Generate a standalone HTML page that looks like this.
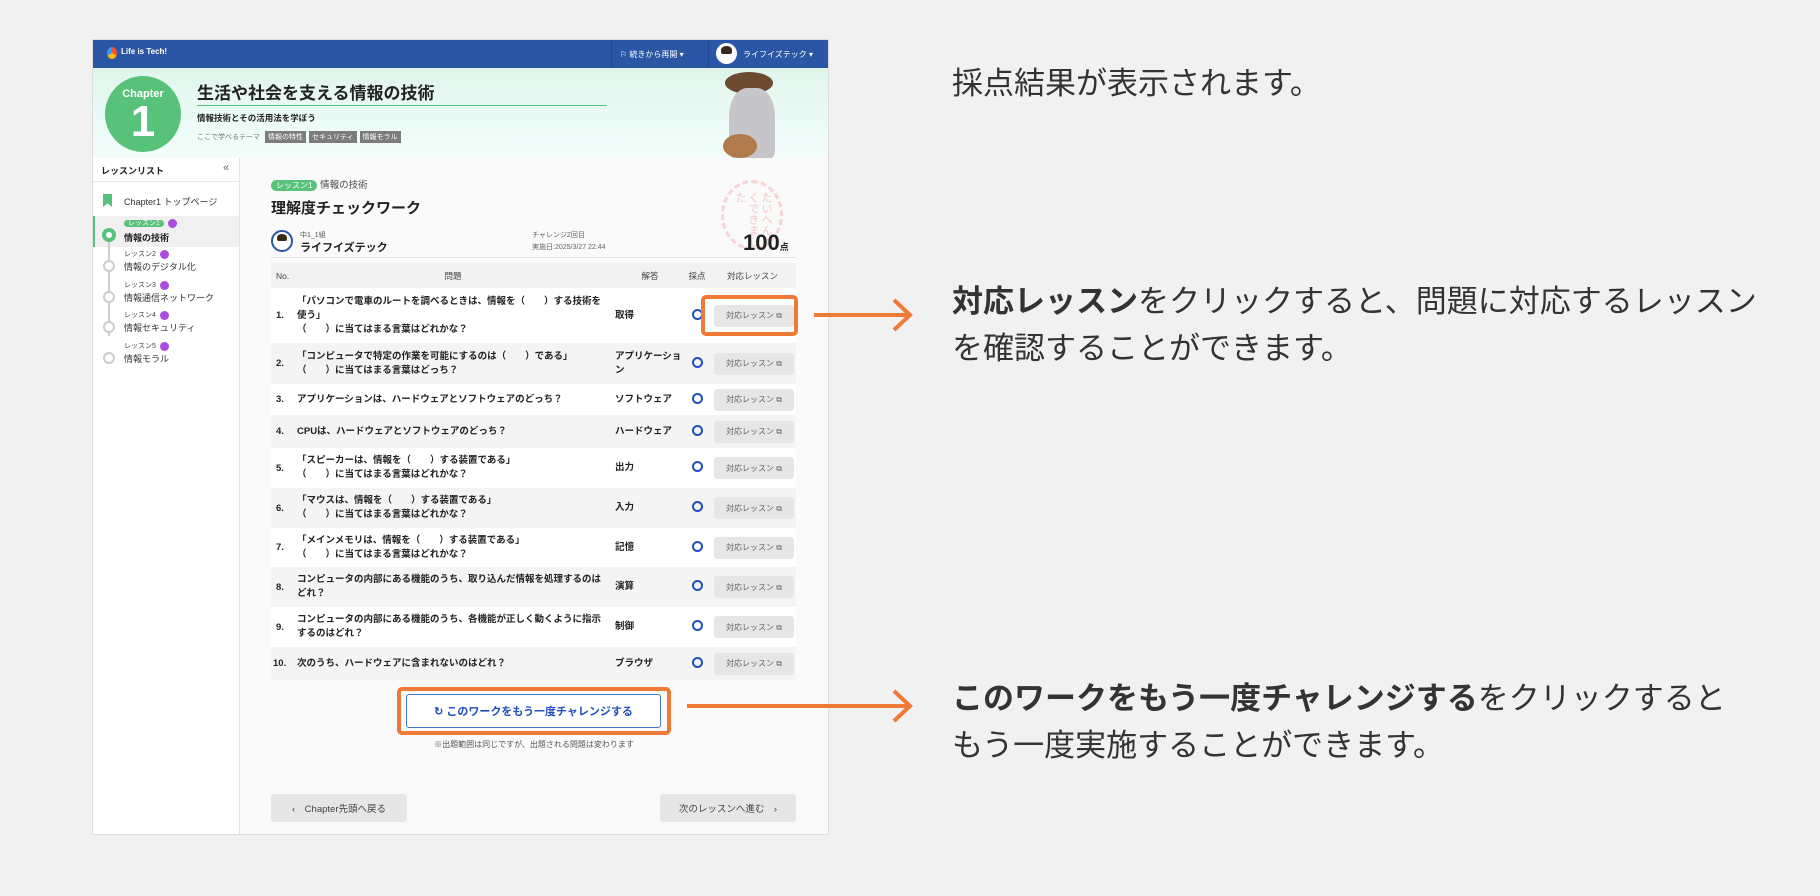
<!DOCTYPE html>
<html><head><meta charset="utf-8">
<style>
*{box-sizing:border-box;margin:0;padding:0}
body{width:1820px;height:896px;background:#f1f1f1;font-family:"Liberation Sans","Noto Sans CJK JP",sans-serif;color:#222;position:relative;overflow:hidden}
.abs{position:absolute}
.panel{left:92px;top:39px;width:737px;height:796px;background:#fafafa;border:1px solid #ddd;overflow:hidden}
.hdr{left:0;top:0;width:737px;height:28px;background:#2a56a5;color:#fff;font-size:9px}
.banner{left:0;top:28px;width:737px;height:90px;background:linear-gradient(180deg,#dff5ea,#ecfbf7 60%,#f3fdfb)}
.side{left:0;top:118px;width:147px;height:678px;background:#fff;border-right:1px solid #e4e4e4}
.row{position:absolute;left:178px;width:525px;display:flex;align-items:center;font-size:9.5px;font-weight:bold;color:#222}
.row .no{width:26px;padding-left:5px}
.row .q{width:318px;line-height:14px;padding-right:6px}
.row .a{width:70px;line-height:14px}
.row .m{width:24px;text-align:center}
.row .m i{display:inline-block;width:11px;height:11px;border:2px solid #1f4fc2;border-radius:50%}
.btn{margin-left:5px;width:80px;height:22px;background:#e6e6e6;border-radius:3px;font-size:8px;color:#666;font-weight:normal;display:flex;align-items:center;justify-content:center}
.rt{font-size:31px;color:#333;line-height:47px;left:952px}
.tag{display:inline-block;background:#7c7c7c;color:#fff;font-size:7px;padding:1px 3px;margin-left:3px}
.star{display:inline-block;width:9px;height:9px;border-radius:50%;background:#a94ee0;margin-left:4px;vertical-align:middle}
</style></head><body>

<div class="abs panel">
  <div class="abs hdr">
    <div class="abs" style="left:14px;top:7px;width:10px;height:12px;border-radius:50%;background:conic-gradient(#e53 0 33%,#fb0 0 66%,#39f 0)"></div>
    <div class="abs" style="left:28px;top:7px;font-size:8px;font-weight:bold">Life is Tech!</div>
    <div class="abs" style="left:518px;top:0;width:1px;height:28px;background:#1d4590"></div>
    <div class="abs" style="left:527px;top:9px;font-size:8px">⚐ 続きから再開 ▾</div>
    <div class="abs" style="left:615px;top:0;width:1px;height:28px;background:#1d4590"></div>
    <div class="abs" style="left:623px;top:3px;width:21px;height:21px;border-radius:50%;background:#fff"></div>
    <div class="abs" style="left:628px;top:6px;width:11px;height:8px;border-radius:50% 50% 2px 2px;background:#3a2a1c"></div>
    <div class="abs" style="left:650px;top:9px;font-size:8px">ライフイズテック ▾</div>
  </div>
  <div class="abs banner">
    <div class="abs" style="left:12px;top:8px;width:76px;height:76px;border-radius:50%;background:#58c27a;color:#fff;text-align:center">
      <div style="font-size:11px;font-weight:bold;margin-top:12px">Chapter</div>
      <div style="font-size:44px;font-weight:bold;line-height:44px">1</div>
    </div>
    <div class="abs" style="left:104px;top:11px;font-size:17px;font-weight:bold;color:#222">生活や社会を支える情報の技術</div>
    <div class="abs" style="left:104px;top:37px;width:410px;height:1px;background:#58c27a"></div>
    <div class="abs" style="left:104px;top:44px;font-size:8.5px;font-weight:bold">情報技術とその活用法を学ぼう</div>
    <div class="abs" style="left:104px;top:63px;font-size:7px;color:#777">ここで学べるテーマ <span class="tag">情報の特性</span><span class="tag">セキュリティ</span><span class="tag">情報モラル</span></div>
    <div class="abs" style="left:632px;top:4px;width:48px;height:22px;border-radius:50%;background:#6b4a30"></div>
    <div class="abs" style="left:636px;top:20px;width:46px;height:70px;border-radius:40% 40% 10% 10%;background:#c6c6ca"></div>
    <div class="abs" style="left:630px;top:66px;width:34px;height:24px;border-radius:50%;background:#b07a4a"></div>
  </div>
  <div class="abs side">
    <div class="abs" style="left:0;top:0;width:147px;height:24px;border-bottom:1px solid #e8e8e8"></div>
    <div class="abs" style="left:8px;top:6px;font-size:9px;font-weight:bold">レッスンリスト</div>
    <div class="abs" style="left:130px;top:4px;font-size:11px;color:#666">«</div>
    <div class="abs" style="left:10px;top:36px;width:9px;height:13px;background:#58c27a;clip-path:polygon(0 0,100% 0,100% 100%,50% 72%,0 100%)"></div>
    <div class="abs" style="left:31px;top:37px;font-size:9px;color:#333">Chapter1 トップページ</div>
    <div class="abs" style="left:0;top:58px;width:146px;height:31px;background:#f0f0f0;border-left:2px solid #58c27a"></div>
    <div class="abs" style="left:15px;top:75px;width:2px;height:103px;background:#ccc"></div>
    <div class="abs" style="left:9px;top:70px;width:14px;height:14px;border-radius:50%;background:#58c27a"></div>
    <div class="abs" style="left:13px;top:74px;width:6px;height:6px;border-radius:50%;background:#fff"></div>
    <div class="abs" style="left:31px;top:60px;font-size:7px"><span style="background:#58c27a;color:#fff;border-radius:6px;padding:0 4px">レッスン1</span><span class="star"></span></div>
    <div class="abs" style="left:31px;top:73px;font-size:9px;font-weight:bold">情報の技術</div>
    <div class="abs" style="left:31px;top:91px;font-size:7px;color:#444">レッスン2<span class="star"></span></div>
    <div class="abs" style="left:31px;top:102px;font-size:9px;color:#333">情報のデジタル化</div>
    <div class="abs" style="left:31px;top:122px;font-size:7px;color:#444">レッスン3<span class="star"></span></div>
    <div class="abs" style="left:31px;top:133px;font-size:9px;color:#333">情報通信ネットワーク</div>
    <div class="abs" style="left:31px;top:152px;font-size:7px;color:#444">レッスン4<span class="star"></span></div>
    <div class="abs" style="left:31px;top:163px;font-size:9px;color:#333">情報セキュリティ</div>
    <div class="abs" style="left:31px;top:183px;font-size:7px;color:#444">レッスン5<span class="star"></span></div>
    <div class="abs" style="left:31px;top:194px;font-size:9px;color:#333">情報モラル</div>
    <div class="abs" style="left:10px;top:102px;width:12px;height:12px;border-radius:50%;border:2px solid #ccc;background:#fff"></div>
    <div class="abs" style="left:10px;top:133px;width:12px;height:12px;border-radius:50%;border:2px solid #ccc;background:#fff"></div>
    <div class="abs" style="left:10px;top:163px;width:12px;height:12px;border-radius:50%;border:2px solid #ccc;background:#fff"></div>
    <div class="abs" style="left:10px;top:194px;width:12px;height:12px;border-radius:50%;border:2px solid #ccc;background:#fff"></div>
  </div>

  <div class="abs" style="left:178px;top:137px;font-size:9.5px;color:#444"><span style="background:#58c27a;color:#fff;border-radius:7px;padding:1px 5px;font-size:8px">レッスン1</span> 情報の技術</div>
  <div class="abs" style="left:178px;top:157px;font-size:15px;font-weight:bold">理解度チェックワーク</div>
  <div class="abs" style="left:178px;top:190px;width:22px;height:22px;border-radius:50%;border:2px solid #2a56a5;background:#fff"></div>
  <div class="abs" style="left:184px;top:194px;width:10px;height:7px;border-radius:50% 50% 2px 2px;background:#3a2a1c"></div>
  <div class="abs" style="left:207px;top:190px;font-size:7px;color:#555">中1_1組</div>
  <div class="abs" style="left:207px;top:199px;font-size:11px;font-weight:bold">ライフイズテック</div>
  <div class="abs" style="left:439px;top:190px;font-size:7px;color:#666">チャレンジ2回目</div>
  <div class="abs" style="left:439px;top:202px;font-size:7px;color:#666">実施日:2025/3/27 22:44</div>
  <div class="abs" style="left:628px;top:140px;width:62px;height:70px;border-radius:50%;border:3px dashed #f6d4d4"></div>
  <div class="abs" style="left:640px;top:152px;font-size:11px;color:#f3c8c8;line-height:13px;writing-mode:vertical-rl;height:55px">たいへんよくできました</div>
  <div class="abs" style="left:650px;top:190px;font-size:22px;font-weight:bold">100<span style="font-size:9px">点</span></div>
  <div class="abs" style="left:178px;top:217px;width:525px;height:1px;background:#e3e3e3"></div>

  <div class="row" style="top:223px;height:25px;background:#f2f2f2;font-weight:normal;font-size:8.5px;color:#444">
    <div class="no">No.</div><div class="q" style="text-align:center">問題</div><div class="a" style="text-align:center">解答</div><div class="m">採点</div><div style="width:87px;text-align:center">対応レッスン</div>
  </div>
  <div class="row" style="top:248px;height:55px;background:#fff"><div class="no">1.</div><div class="q">「パソコンで電車のルートを調べるときは、情報を（　　）する技術を使う」<br>（　　）に当てはまる言葉はどれかな？</div><div class="a">取得</div><div class="m"><i></i></div><div class="btn">対応レッスン ⧉</div></div>
  <div class="row" style="top:303px;height:41px;background:#f4f4f4"><div class="no">2.</div><div class="q">「コンピュータで特定の作業を可能にするのは（　　）である」<br>（　　）に当てはまる言葉はどっち？</div><div class="a">アプリケーション</div><div class="m"><i></i></div><div class="btn">対応レッスン ⧉</div></div>
  <div class="row" style="top:344px;height:31px;background:#fff"><div class="no">3.</div><div class="q">アプリケーションは、ハードウェアとソフトウェアのどっち？</div><div class="a">ソフトウェア</div><div class="m"><i></i></div><div class="btn">対応レッスン ⧉</div></div>
  <div class="row" style="top:375px;height:33px;background:#f4f4f4"><div class="no">4.</div><div class="q">CPUは、ハードウェアとソフトウェアのどっち？</div><div class="a">ハードウェア</div><div class="m"><i></i></div><div class="btn">対応レッスン ⧉</div></div>
  <div class="row" style="top:408px;height:40px;background:#fff"><div class="no">5.</div><div class="q">「スピーカーは、情報を（　　）する装置である」<br>（　　）に当てはまる言葉はどれかな？</div><div class="a">出力</div><div class="m"><i></i></div><div class="btn">対応レッスン ⧉</div></div>
  <div class="row" style="top:448px;height:40px;background:#f4f4f4"><div class="no">6.</div><div class="q">「マウスは、情報を（　　）する装置である」<br>（　　）に当てはまる言葉はどれかな？</div><div class="a">入力</div><div class="m"><i></i></div><div class="btn">対応レッスン ⧉</div></div>
  <div class="row" style="top:488px;height:39px;background:#fff"><div class="no">7.</div><div class="q">「メインメモリは、情報を（　　）する装置である」<br>（　　）に当てはまる言葉はどれかな？</div><div class="a">記憶</div><div class="m"><i></i></div><div class="btn">対応レッスン ⧉</div></div>
  <div class="row" style="top:527px;height:40px;background:#f4f4f4"><div class="no">8.</div><div class="q">コンピュータの内部にある機能のうち、取り込んだ情報を処理するのはどれ？</div><div class="a">演算</div><div class="m"><i></i></div><div class="btn">対応レッスン ⧉</div></div>
  <div class="row" style="top:567px;height:40px;background:#fff"><div class="no">9.</div><div class="q">コンピュータの内部にある機能のうち、各機能が正しく動くように指示するのはどれ？</div><div class="a">制御</div><div class="m"><i></i></div><div class="btn">対応レッスン ⧉</div></div>
  <div class="row" style="top:607px;height:33px;background:#f4f4f4"><div class="no" style="padding-left:2px">10.</div><div class="q">次のうち、ハードウェアに含まれないのはどれ？</div><div class="a">ブラウザ</div><div class="m"><i></i></div><div class="btn">対応レッスン ⧉</div></div>

  <div class="abs" style="left:608px;top:255px;width:97px;height:41px;border:4px solid #ee7a35;border-radius:5px"></div>

  <div class="abs" style="left:313px;top:654px;width:255px;height:34px;border:1px solid #4a74c9;border-radius:3px;background:#fff;color:#1f4fc2;font-size:11px;font-weight:bold;display:flex;align-items:center;justify-content:center">↻ このワークをもう一度チャレンジする</div>
  <div class="abs" style="left:304px;top:647px;width:274px;height:48px;border:4px solid #ee7a35;border-radius:5px"></div>
  <div class="abs" style="left:300px;top:699px;width:282px;text-align:center;font-size:8px;color:#555">※出題範囲は同じですが、出題される問題は変わります</div>

  <div class="abs" style="left:178px;top:754px;width:136px;height:28px;background:#e6e6e6;border-radius:3px;font-size:9.5px;color:#444;display:flex;align-items:center;justify-content:center">‹　Chapter先頭へ戻る</div>
  <div class="abs" style="left:567px;top:754px;width:136px;height:28px;background:#e6e6e6;border-radius:3px;font-size:9.5px;color:#444;display:flex;align-items:center;justify-content:center">次のレッスンへ進む　›</div>
</div>

<svg class="abs" style="left:810px;top:295px" width="110" height="40"><path d="M4 20H100M84 5L100 20L84 35" fill="none" stroke="#ee7a35" stroke-width="4"/></svg>
<svg class="abs" style="left:684px;top:686px" width="236" height="40"><path d="M3 20H226M210 5L226 20L210 35" fill="none" stroke="#ee7a35" stroke-width="4"/></svg>

<div class="abs rt" style="top:60px">採点結果が表示されます。</div>
<div class="abs rt" style="top:278px"><b>対応レッスン</b>をクリックすると、問題に対応するレッスン<br>を確認することができます。</div>
<div class="abs rt" style="top:675px"><b>このワークをもう一度チャレンジする</b>をクリックすると<br>もう一度実施することができます。</div>
</body></html>
